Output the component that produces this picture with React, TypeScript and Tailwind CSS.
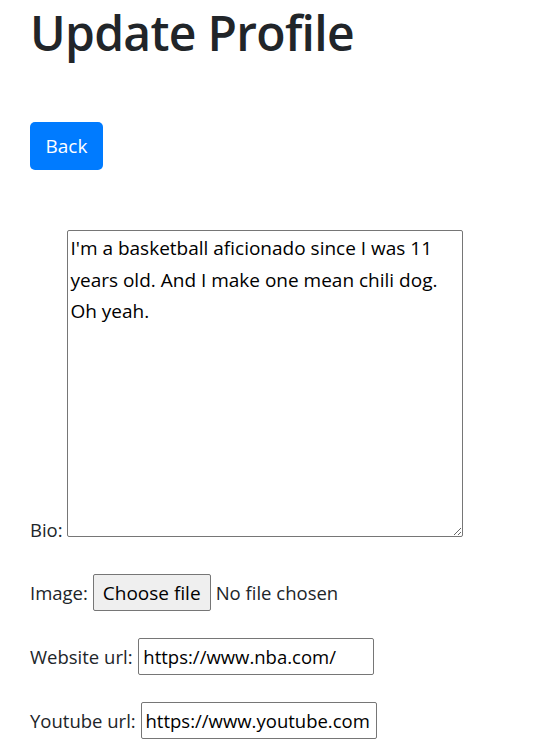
import React from 'react';

export default function App() {
  const font = { fontFamily: '"Open Sans", "Noto Sans", sans-serif' };
  return (
    <div className="min-h-[743px] bg-white pl-[30px] text-[#212529]" style={font}>
      <h1 className="m-0 pt-[2px] text-[48px] font-semibold leading-[62px] tracking-[-0.7px]">Update Profile</h1>

      <button
        type="button"
        className="mt-[58px] h-[48px] w-[73px] rounded-[5px] bg-[#007bff] text-[19px] text-white"
      >
        Back
      </button>

      <form className="mt-[60px] text-[18.5px] leading-[30px]">
        <div>
          <label>
            Bio:{' '}
            <textarea
              className="h-[307px] w-[396px] resize rounded-[2px] border border-[#767676] px-[2px] pt-[2px] align-baseline text-[19px] leading-[31.5px] text-black outline-none"
              defaultValue={"I'm a basketball aficionado since I was 11\nyears old. And I make one mean chili dog.\nOh yeah."}
            />
          </label>
        </div>

        <div className="mt-[29px] flex items-center">
          <span>Image:&nbsp;</span>
          <span className="flex h-[37px] w-[118px] items-center justify-center rounded-[2px] border border-[#767676] bg-[#efefef] text-[19px] text-black">
            Choose file
          </span>
          <span className="ml-[5px]">No file chosen</span>
        </div>

        <div className="mt-[27px] flex items-center">
          <span className="mr-[1px]">Website url:&nbsp;</span>
          <input
            type="text"
            defaultValue="https://www.nba.com/"
            className="h-[37px] w-[236px] rounded-[2px] border border-[#767676] px-[4px] text-[18.5px] text-black outline-none"
          />
        </div>

        <div className="mt-[27px] flex items-center">
          <span>Youtube url:&nbsp;</span>
          <input
            type="text"
            defaultValue="https://www.youtube.com"
            className="h-[37px] w-[236px] rounded-[2px] border border-[#767676] px-[4px] text-[18.5px] text-black outline-none"
          />
        </div>
      </form>
    </div>
  );
}
